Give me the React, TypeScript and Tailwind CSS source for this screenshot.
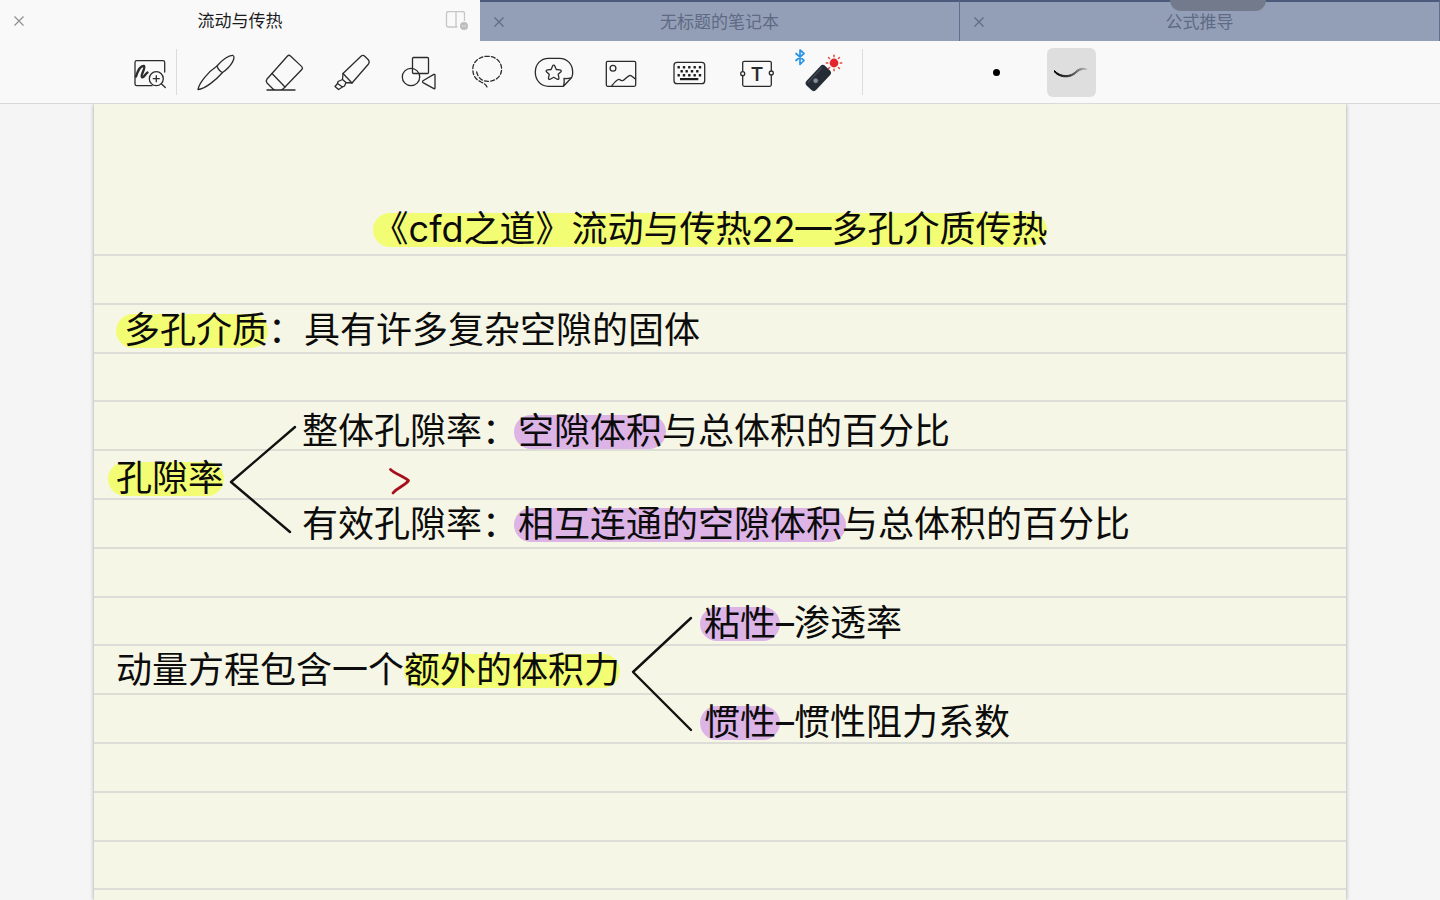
import type { ReactNode } from "react";

const tabs = [
  { title: "流动与传热", active: true },
  { title: "无标题的笔记本", active: false },
  { title: "公式推导", active: false }
];

const ruleRows = Array.from({ length: 30 }, (_, index) => index);

const keyDots = [
  [13.7, 19.3], [19, 19.3], [24.3, 19.3], [29.7, 19.3], [35, 19.3],
  [16.7, 23.3], [21.7, 23.3], [27, 23.3], [32.3, 23.3],
  [13.7, 27.2], [19, 27.2], [24.3, 27.2], [29.7, 27.2], [35, 27.2]
];

const rayAngles = [0, 45, 90, 135, 180, 225, 270, 315];

const highlightTones = {
  yellow: "-ml-2 inline-block rounded-full bg-[#f3fd74] pb-0.5 pl-2 leading-8 text-inherit",
  plainYellow: "inline-block rounded-full bg-[#f3fd74] pb-0.5 leading-8 text-inherit",
  purple: "-mx-1 inline-block rounded-full bg-[#dcb4e6] px-1 pb-0.5 leading-8 text-inherit"
};

function Icon({ children }: { children: ReactNode }) {
  return (
    <svg
      viewBox="0 0 48 48"
      fill="none"
      stroke="#2b2b2d"
      strokeWidth="1.3"
      strokeLinecap="round"
      strokeLinejoin="round"
      aria-hidden="true"
      className="size-12 overflow-visible"
    >
      {children}
    </svg>
  );
}

const tools = [
  {
    label: "钢笔",
    icon: (
      <Icon>
        <path d="M5 41.5C6 35 15 24 24 18C29 12 36 7 40 7.5C43 9 39 18 29.5 24.5C23 32 12 41 5 41.5Z" />
        <path d="M24 18C25 21 27 23.5 29.5 24.5" />
      </Icon>
    )
  },
  {
    label: "橡皮擦",
    icon: (
      <Icon>
        <path d="M27.5 8Q29 6.5 30.5 8L41.8 18.6Q43.2 20 41.8 21.5L25 39L12 25.5Z" />
        <path d="M12 25.5L7 31Q5.5 33 7 35L13 41Q14 42 15.5 42H20.5Q22 42 23 41L25 39M7 42H35" />
      </Icon>
    )
  },
  {
    label: "荧光笔",
    icon: (
      <Icon>
        <path d="M15 25.5L33 8.2Q35 6.5 37 8.5L40.5 12Q42 14 40.5 16L24 35Z" />
        <path d="M15 25.5L14.5 31.5L18 34.5L24 35M14.5 31.5L10 33.5L9.5 35.5L14.5 39L16.500 38L18 34.5M9.5 35.5L7 38.5L10.5 41.5L14.5 39" />
      </Icon>
    )
  },
  {
    label: "形状",
    icon: (
      <Icon>
        <rect x="17.5" y="9.5" width="16" height="16" rx="1" />
        <circle cx="16" cy="29" r="8.7" />
        <path d="M28 32.8L38.8 26.4Q40 26 40 27.2V40Q40 41.2 38.9 40.6L28 34.6Q27 33.7 28 32.8Z" />
      </Icon>
    )
  },
  {
    label: "套索",
    icon: (
      <Icon>
        <path
          strokeDasharray="4 2.2"
          d="M13.7 24C15 30 19 33.3 25 33.3C33 33.3 38.6 28 38.6 21C38.6 14 33 8.3 24.5 8.3C16 8.3 9.8 14 9.8 21C9.8 28 13 31.5 18 34C21.5 35.5 24 37 24.5 41"
        />
      </Icon>
    )
  },
  {
    label: "贴纸",
    icon: (
      <Icon>
        <path d="M33.5 38.3H18.5C10.5 38.3 5.3 32 5.3 24.3C5.3 16.5 10.5 10.3 18.5 10.3H29.5C37.5 10.3 42.7 16.5 42.7 24.3C42.7 26.5 42.5 28 41.7 29.5L33.5 38.3C34.5 35 34.5 33 34 30.5C37 31 39 30.5 41.7 29.5" />
        <path d="M23.7 17.2Q24.5 17.2 24.9 18.2L26.3 21.5L29.9 21.9Q32.2 22.3 30.7 24L28.2 26.3L28.9 29.9Q29.1 32.1 27.2 31.2L23.7 29.3L20.2 31.2Q18.3 32.1 18.5 29.9L19.2 26.3L16.7 24Q15.2 22.3 17.5 21.9L21.1 21.5L22.5 18.2Q22.9 17.2 23.7 17.2Z" />
      </Icon>
    )
  },
  {
    label: "图片",
    icon: (
      <Icon>
        <rect x="8.3" y="13.3" width="29.4" height="25" rx="1.5" />
        <circle cx="15" cy="20.3" r="2.9" />
        <path d="M14 37.5C16 35 18 32.5 20.3 31.5C22 31 23 33 24.7 32.7C27 32 29 28 32 27.3C34 27.5 35.5 30 37.5 31" />
      </Icon>
    )
  },
  {
    label: "键盘",
    icon: (
      <Icon>
        <rect x="9" y="14.3" width="30.7" height="21.4" rx="3" />
        <g fill="#1d1d1f" stroke="none">
          {keyDots.map(([x, y]) => (
            <rect key={`${x}-${y}`} x={x - 1.2} y={y - 1.2} width="2.4" height="2.4" rx="0.5" />
          ))}
          <rect x="15" y="30" width="18.3" height="2.2" />
        </g>
      </Icon>
    )
  },
  {
    label: "文本",
    icon: (
      <Icon>
        <path d="M9.7 23.5V14.8Q9.7 13.3 11.2 13.3H36.8Q38.3 13.3 38.3 14.8V22.8M38.3 27.2V36.8Q38.3 38.3 36.8 38.3H11.2Q9.7 38.3 9.7 36.8V28" />
        <circle cx="9.7" cy="25.7" r="2" />
        <circle cx="38.3" cy="25" r="2" />
        <text
          x="24"
          y="32.5"
          textAnchor="middle"
          fill="#2b2b2d"
          stroke="none"
          fontSize="19"
          fontWeight="600"
          fontFamily="Inter, sans-serif"
        >
          T
        </text>
      </Icon>
    )
  },
  {
    label: "激光笔",
    icon: (
      <Icon>
        <path stroke="#2a94e4" strokeWidth="1.7" d="M-4 5.5L4 12.5L0 16.5V2L4 5.5L-4 12.5" />
        <g transform="rotate(-47 18.3 30)">
          <rect x="4.8" y="23.4" width="27" height="13.2" rx="3.5" fill="#262c35" stroke="none" />
          <path d="M8 25.6H28" stroke="#4b535e" strokeWidth="1" />
        </g>
        <circle cx="15.7" cy="32.7" r="2.3" fill="#8d939b" stroke="#5d646e" strokeWidth="0.8" />
        <circle cx="34" cy="15" r="4.4" fill="#e3262c" stroke="none" />
        <g stroke="#dc4a3c" strokeWidth="1.4">
          {rayAngles.map((angle) => (
            <path key={angle} d="M40.2 15H41.8" transform={`rotate(${angle} 34 15)`} />
          ))}
        </g>
      </Icon>
    )
  }
];

function Highlight({ tone, children }: { tone: keyof typeof highlightTones; children: ReactNode }) {
  return <mark className={highlightTones[tone]}>{children}</mark>;
}

function TabBar() {
  return (
    <nav aria-label="标签页" className="relative grid grid-cols-3 bg-[#f9f9f9]">
      {tabs.map((tab) => (
        <div
          key={tab.title}
          className={
            tab.active
              ? "flex h-[41px] items-center px-3 text-[#1c1c1e]"
              : "flex h-[41px] items-center border-t-2 border-r border-t-[#4c5a7c] border-r-[#5f6d8e] bg-[#939fb6] px-3 text-[#5f6a85] last:border-r-0"
          }
        >
          <button type="button" aria-label="关闭" className="grid w-8 shrink-0 justify-start pl-[2px]">
            <svg viewBox="0 0 10 10" aria-hidden="true" className="size-[10px]">
              <path
                d="M0.5 0.5L9.5 9.5M9.5 0.5L0.5 9.5"
                stroke={tab.active ? "#8f8f92" : "#5f6a85"}
                strokeWidth="1.2"
              />
            </svg>
          </button>
          <span className="flex-1 text-center text-[17px] leading-6">{tab.title}</span>
          <span className="flex w-8 shrink-0 justify-end">
            {tab.active && (
              <button type="button" aria-label="分屏">
                <svg viewBox="0 0 24 20" fill="none" aria-hidden="true" className="h-5 w-6">
                  <path
                    d="M20.5 10V2.500Q20.5 0.500 18.500 0.500H4.500Q2.500 0.500 2.500 2.500V14Q2.500 16 4.500 16H13.500M12 0.500V16"
                    stroke="#c6c6c8"
                    strokeWidth="1.300"
                  />
                  <circle cx="20" cy="15" r="4" fill="#bdbdbf" />
                  <path d="M18 15H22" stroke="#f0f0f0" strokeWidth="1" strokeDasharray="1 0.5" />
                </svg>
              </button>
            )}
          </span>
        </div>
      ))}
      <div className="absolute top-0 right-[174px] h-[11px] w-24 rounded-b-[12px] bg-[#737a8b]" />
    </nav>
  );
}

function Toolbar() {
  return (
    <div
      role="toolbar"
      className="relative z-10 flex h-[63px] items-center border-b border-[#d9d9d6] bg-[#f9f9f9] pl-[126px]"
    >
      <button type="button" aria-label="缩放">
        <Icon>
          <path d="M38.7 24V14.5Q38.7 12.7 36.9 12.7H10.8Q9 12.7 9 14.5V35.9Q9 37.7 10.8 37.7H26" />
          <path strokeWidth="2.4" d="M10 28.5C12 22 15 17.5 18 18C20 19.5 14 28 16 29.3C18 30 19 26 21.5 24.5" />
          <circle cx="30.3" cy="30.7" r="7" />
          <path d="M35.3 35.8L39.3 39.5M30.3 27.7V33.7M27.3 30.7H33.3" />
        </Icon>
      </button>
      <div className="mr-1.5 ml-0.5 h-[46px] w-px bg-[#dcdcdc]" />
      <div className="flex w-[675px] shrink-0">
        {tools.map((tool) => (
          <button key={tool.label} type="button" aria-label={tool.label} className="grid flex-1 place-items-center">
            {tool.icon}
          </button>
        ))}
      </div>
      <div className="mx-1 h-[46px] w-px bg-[#dcdcdc]" />
      <div className="flex items-center gap-[26px] pl-[105px]">
        <button type="button" aria-label="笔尖" className="grid size-[49px] place-items-center">
          <span className="size-[7px] rounded-full bg-black" />
        </button>
        <button type="button" aria-label="笔触" className="grid size-[49px] place-items-center rounded-md bg-[#dedede]">
          <svg viewBox="0 0 49 49" fill="none" aria-hidden="true" className="size-[49px]">
            <defs>
              <linearGradient id="stroke-fade" x1="7" x2="41" y1="0" y2="0" gradientUnits="userSpaceOnUse">
                <stop offset="0" stopColor="#000" />
                <stop offset="0.45" stopColor="#333" />
                <stop offset="1" stopColor="#c4c4c4" />
              </linearGradient>
            </defs>
            <path
              d="M7.5 22.5C11 27 20 30 27 25C31 20.500 36 19 40 21.500C36 20.500 32 22 28.5 25.500C21 31.5 11 28.500 7.5 24Z"
              fill="url(#stroke-fade)"
              stroke="url(#stroke-fade)"
              strokeWidth="1"
              strokeLinejoin="round"
            />
          </svg>
        </button>
      </div>
    </div>
  );
}

function Bracket({ path }: { path: string }) {
  return (
    <svg viewBox="0 0 64 112" fill="none" aria-hidden="true" className="h-28 w-16 shrink-0 overflow-visible">
      <path d={path} stroke="#111" strokeWidth="2.4" strokeLinecap="round" strokeLinejoin="round" />
    </svg>
  );
}

function NotePage() {
  return (
    <article className="relative isolate mx-[94px] flex-1 overflow-hidden bg-[#f6f6e6] px-[22px] pt-[101px] text-4xl leading-[48px] text-[#0c0c0c] shadow-[0_0_4px_rgba(0,0,0,0.35)]">
      <div aria-hidden="true" className="absolute inset-x-0 top-[103px] -z-10">
        {ruleRows.map((row) => (
          <div
            key={row}
            className={
              row % 5 === 3
                ? "h-12 border-b-2 border-[#dcddd6]"
                : "h-[49px] border-b-2 border-[#dcddd6]"
            }
          />
        ))}
      </div>

      <h1 className="pr-5 text-center">
        <Highlight tone="plainYellow">《cfd之道》流动与传热22—多孔介质传热</Highlight>
      </h1>

      <p className="mt-[53px] pl-2">
        <Highlight tone="yellow">多孔介质</Highlight>：具有许多复杂空隙的固体
      </p>

      <section className="mt-[53px] flex items-center">
        <p>
          <Highlight tone="yellow">孔隙率</Highlight>
        </p>
        <div className="pr-2 pl-[6px]">
          <Bracket path="M65 5L1 60L60 110" />
        </div>
        <div>
          <p>
            整体孔隙率：<Highlight tone="purple">空隙体积</Highlight>与总体积的百分比
          </p>
          <div className="flex h-[45px] items-center pt-1.5 pl-[86px]">
            <svg viewBox="0 0 24 28" fill="none" role="img" aria-label="大于" className="h-7 w-6">
              <path
                d="M2.5 2.5C7 7 15 9 20.5 13.5C18 18 9 21 5 26"
                stroke="#a80f1c"
                strokeWidth="2.8"
                strokeLinecap="round"
                strokeLinejoin="round"
              />
            </svg>
          </div>
          <p>
            有效孔隙率：<Highlight tone="purple">相互连通的空隙体积</Highlight>与总体积的百分比
          </p>
        </div>
      </section>

      <section className="mt-[51px] flex items-center">
        <p className="pb-1.5">
          动量方程包含一个<Highlight tone="plainYellow">额外的体积力</Highlight>
        </p>
        <div className="pr-2 pl-3">
          <Bracket path="M59 1L1 55L59 113" />
        </div>
        <div className="grid gap-[51px]">
          <p>
            <Highlight tone="purple">粘性</Highlight>–渗透率
          </p>
          <p>
            <Highlight tone="purple">惯性</Highlight>–惯性阻力系数
          </p>
        </div>
      </section>
    </article>
  );
}

export default function App() {
  return (
    <main className="flex h-screen flex-col overflow-hidden bg-[#f5f5f6] font-['Inter','Noto_Sans_CJK_SC',sans-serif]">
      <TabBar />
      <Toolbar />
      <NotePage />
    </main>
  );
}
